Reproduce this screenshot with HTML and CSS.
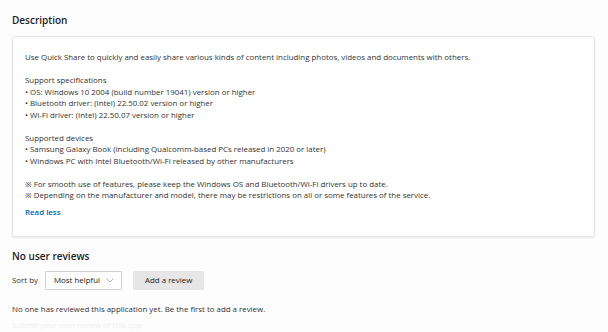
FILE: index.html
```html
<!DOCTYPE html>
<html lang="en">
<head>
    <meta charset="UTF-8">
    <title>Quick Share</title>
    <link rel="stylesheet" href="styles.css">
</head>
<body>
    <section class="description">
        <h2>Description</h2>
        <div class="card">
            <p>Use Quick Share to quickly and easily share various kinds of content including photos, videos and documents with others.</p>
            <p>Support specifications<br>
            • OS: Windows 10 2004 (build number 19041) version or higher<br>
            • Bluetooth driver: (Intel) 22.50.02 version or higher<br>
            • Wi-Fi driver: (Intel) 22.50.07 version or higher</p>
            <p>Supported devices<br>
            • Samsung Galaxy Book (including Qualcomm-based PCs released in 2020 or later)<br>
            • Windows PC with Intel Bluetooth/Wi-Fi released by other manufacturers</p>
            <p class="last">※ For smooth use of features, please keep the Windows OS and Bluetooth/Wi-Fi drivers up to date.<br>
            ※ Depending on the manufacturer and model, there may be restrictions on all or some features of the service.</p>
            <a class="read-less" href="#">Read less</a>
        </div>
    </section>
    <section class="reviews">
        <h2>No user reviews</h2>
        <div class="review-bar">
            <span class="sort-label">Sort by</span>
            <button class="sort-select">Most helpful
                <svg width="8" height="5" viewBox="0 0 8 5"><path d="M0.5 0.5 L4 4 L7.5 0.5" fill="none" stroke="#999" stroke-width="0.8"/></svg>
            </button>
            <button class="add-review">Add a review</button>
        </div>
        <p class="empty">No one has reviewed this application yet. Be the first to add a review.</p>
        <p class="faded">Submit your own review of this app</p>
    </section>
</body>
</html>
```

FILE: styles.css
```css
body {
    background-color: #fdfdfd;
    color: #333;
    font-family: "Open Sans", "Noto Sans", sans-serif;
    font-size: 7.9px;
    margin: 0;
    padding: 10px 12px 0 12px;
}

h2 {
    font-size: 10px;
    font-weight: 600;
    color: #222;
    margin: 0;
    line-height: 20px;
}

.card {
    margin-top: 6px;
    width: 583px;
    box-sizing: border-box;
    background-color: #fff;
    border: 1px solid #e6e6e6;
    border-radius: 3px;
    box-shadow: 0 1px 2px rgba(0, 0, 0, 0.08);
    padding: 15px 12px 17px 12px;
    line-height: 11.5px;
}

.card p {
    margin: 0 0 11.5px 0;
}

.card p.last {
    margin-bottom: 5.5px;
}

.read-less {
    display: inline-block;
    color: #0067b8;
    text-decoration: none;
    font-weight: 600;
}

.reviews {
    margin-top: 9px;
}

.review-bar {
    display: flex;
    align-items: center;
    gap: 7px;
    margin-top: 5px;
}

.sort-label {
    color: #333;
}

.sort-select, .add-review {
    font-family: inherit;
    font-size: 7.9px;
    color: #222;
    height: 19px;
    box-sizing: border-box;
    border-radius: 1px;
}

.sort-select {
    display: flex;
    align-items: center;
    gap: 6px;
    background-color: #fff;
    border: 1px solid #d0d0d0;
    padding: 0 7px 0 8px;
}

.add-review {
    margin-left: 4px;
    background-color: #e6e6e6;
    border: none;
    padding: 0 12px;
}

.empty {
    margin: 14px 0 0 0;
}

.faded {
    margin: 6px 0 0 0;
    color: #f0f0f0;
}
```
